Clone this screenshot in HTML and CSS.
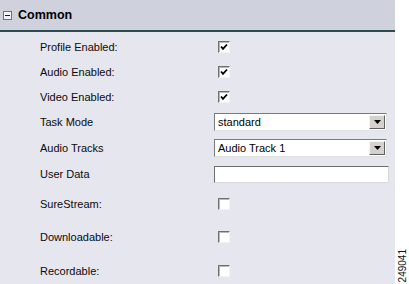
FILE: index.html
```html
<!DOCTYPE html>
<html lang="en">
<head>
    <meta charset="UTF-8">
    <title>Common</title>
    <link rel="stylesheet" href="styles.css">
</head>
<body>
    <div class="panel">
        <div class="panel-header">
            <span class="toggle"></span>
            <span class="panel-title">Common</span>
        </div>
        <div class="panel-body">
            <div class="row">
                <span class="label">Profile Enabled:</span>
                <span class="check checked"><svg viewBox="0 0 8 8"><path d="M1 3.5 L3 5.8 L7 1.5" /></svg></span>
            </div>
            <div class="row">
                <span class="label">Audio Enabled:</span>
                <span class="check checked"><svg viewBox="0 0 8 8"><path d="M1 3.5 L3 5.8 L7 1.5" /></svg></span>
            </div>
            <div class="row">
                <span class="label">Video Enabled:</span>
                <span class="check checked"><svg viewBox="0 0 8 8"><path d="M1 3.5 L3 5.8 L7 1.5" /></svg></span>
            </div>
            <div class="row tall">
                <span class="label">Task Mode</span>
                <div class="select">
                    <span class="select-text">standard</span>
                    <span class="select-btn"><svg viewBox="0 0 7 4"><path d="M0 0 H7 L3.5 4 Z" /></svg></span>
                </div>
            </div>
            <div class="row tall">
                <span class="label">Audio Tracks</span>
                <div class="select">
                    <span class="select-text">Audio Track 1</span>
                    <span class="select-btn"><svg viewBox="0 0 7 4"><path d="M0 0 H7 L3.5 4 Z" /></svg></span>
                </div>
            </div>
            <div class="row tall">
                <span class="label">User Data</span>
                <div class="text-input"></div>
            </div>
            <div class="row wide-first">
                <span class="label">SureStream:</span>
                <span class="check"></span>
            </div>
            <div class="row wide">
                <span class="label">Downloadable:</span>
                <span class="check"></span>
            </div>
            <div class="row wide">
                <span class="label">Recordable:</span>
                <span class="check"></span>
            </div>
        </div>
    </div>
    <div class="side">
        <span class="fig-id">249041</span>
    </div>
</body>
</html>
```

FILE: styles.css
```css
body {
    margin: 0;
    padding: 0;
    display: flex;
    height: 284px;
    overflow: hidden;
    font-family: "Liberation Sans", Arial, sans-serif;
    background-color: #ffffff;
}
.panel {
    width: 395px;
    background-color: #e6e6ef;
    display: flex;
    flex-direction: column;
}
.panel-header {
    flex-shrink: 0;
    height: 30px;
    background-color: #cfd2dc;
    border-bottom: 2px solid #2e4a51;
    display: flex;
    align-items: center;
    padding-left: 3px;
    gap: 6px;
}
.toggle {
    width: 7px;
    height: 7px;
    border: 1px solid #6a7180;
    background-color: #f4f4f8;
    position: relative;
    margin-top: 1px;
}
.toggle::after {
    content: "";
    position: absolute;
    left: 1px;
    top: 3px;
    width: 5px;
    height: 1px;
    background-color: #1a1a1a;
}
.panel-title {
    font-size: 12.5px;
    font-weight: bold;
    color: #000000;
}
.panel-body {
    flex-shrink: 0;
    padding-top: 2px;
    display: flex;
    flex-direction: column;
}
.row {
    flex-shrink: 0;
    height: 25px;
    display: flex;
    align-items: center;
}
.row.tall {
    height: 26px;
}
.row.wide-first {
    height: 33px;
}
.row.wide {
    height: 34px;
}
.label {
    width: 177px;
    padding-left: 40px;
    font-size: 11px;
    color: #0a0a0a;
}
.check {
    width: 10px;
    height: 10px;
    margin-left: 1px;
    border-top: 1px solid #6f6f6f;
    border-left: 1px solid #6f6f6f;
    border-bottom: 1px solid #f2f2f2;
    border-right: 1px solid #f2f2f2;
    box-shadow: inset 1px 1px 0 #b8b8b8;
    background-color: #ffffff;
    display: flex;
    align-items: center;
    justify-content: center;
}
.check svg {
    width: 8px;
    height: 8px;
}
.check svg path {
    fill: none;
    stroke: #000000;
    stroke-width: 1.8;
}
.select {
    width: 171px;
    height: 16px;
    margin-left: -3px;
    border: 1px solid #7a7a7a;
    border-right-color: #e0e0e0;
    border-bottom-color: #e0e0e0;
    background-color: #ffffff;
    display: flex;
    align-items: center;
    justify-content: space-between;
}
.select-text {
    font-size: 11px;
    padding-left: 3px;
    color: #000000;
}
.select-btn {
    width: 14px;
    height: 12px;
    margin-right: 1px;
    background-color: #d4d2cc;
    border: 1px solid;
    border-color: #f5f5f5 #5e5e5e #5e5e5e #f5f5f5;
    display: flex;
    align-items: center;
    justify-content: center;
}
.select-btn svg {
    width: 7px;
    height: 4px;
}
.select-btn svg path {
    fill: #000000;
}
.text-input {
    width: 173px;
    height: 15px;
    margin-left: -3px;
    border: 1px solid #6e6e6e;
    border-right-color: #d8d8d8;
    border-bottom-color: #d8d8d8;
    background-color: #ffffff;
}
.side {
    width: 14px;
    display: flex;
    align-items: flex-end;
    justify-content: center;
    padding-bottom: 2px;
}
.fig-id {
    writing-mode: vertical-rl;
    transform: rotate(180deg);
    font-size: 10px;
    color: #111111;
}
```
